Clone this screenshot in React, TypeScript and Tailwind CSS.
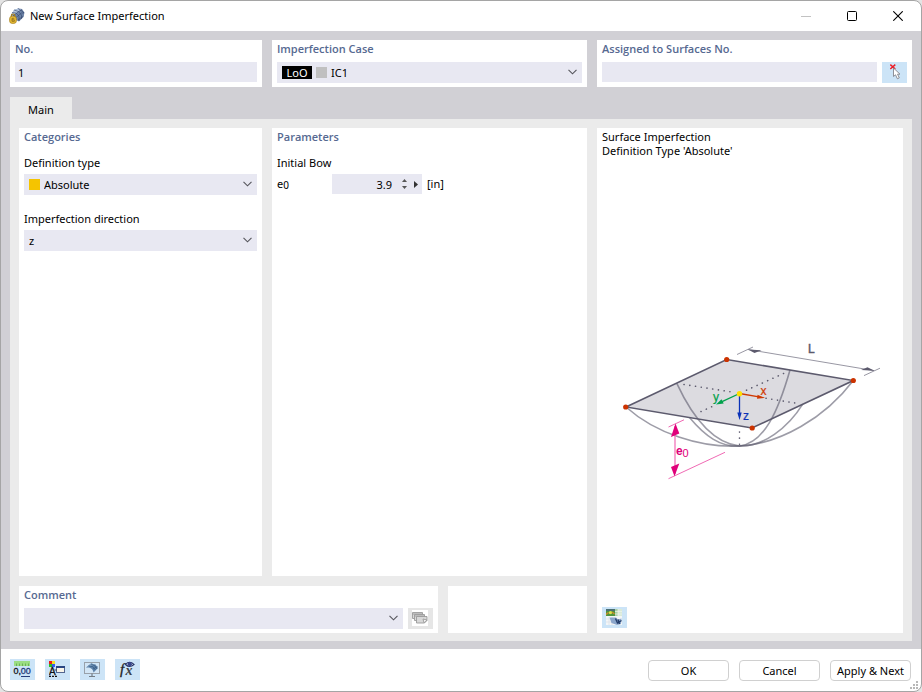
import { useState } from 'react';
import type { ReactNode } from 'react';

const heading = "block font-['Open_Sans',sans-serif] text-[11px] leading-4 font-semibold text-[#566991]";
const iconButton = 'flex h-[21px] w-[25px] shrink-0 items-start bg-[#cce4f7] pt-0.5 pl-1';
const windowButton = 'flex h-full w-[46px] items-center justify-center';
const dialogButton =
  'h-[21px] w-[81px] rounded border border-[#d0d0d0] bg-white text-[11px] leading-4 whitespace-nowrap';

function Chevron() {
  return (
    <svg width="9" height="6" viewBox="0 0 9 6" className="pointer-events-none absolute right-[5px] top-[7px]">
      <path d="M0.5 0.8 L4.5 4.8 L8.5 0.8" fill="none" stroke="#55555c" strokeWidth="1.1" />
    </svg>
  );
}

type DropdownProps = {
  id: string;
  options: string[];
  children?: ReactNode;
};

function Dropdown({ id, options, children }: DropdownProps) {
  return (
    <div className="relative flex h-[21px] min-w-0 flex-1 items-center gap-1 bg-[#e8e8f2] pl-[5px]">
      {children}
      <select id={id} className="h-full min-w-0 flex-1 appearance-none bg-transparent pr-4 text-[11px] leading-4">
        {options.map((option) => (
          <option key={option}>{option}</option>
        ))}
      </select>
      <Chevron />
    </div>
  );
}

function AppIcon() {
  return (
    <svg width="16" height="16" viewBox="0 0 16 16">
      <path d="M2 7 L5 2 L9 0.5 L13 1 L15.5 4.5 L14.5 9 L10 13.5 L7 12 L4 8 Z" fill="#6d84a8" />
      <path d="M5 2 L9 0.5 L13 1 L9.5 3.5 L5 7 L2.5 6 Z" fill="#b3c6df" />
      <path d="M3 4.5 L7 5 L10 8 L10 13 M5 2 L9.5 3.5 L12.5 7 L12.5 11 M9 0.5 L13 3 L15 5 M4 8 L9.5 3.5 L13 1.5 M7 9.5 L12.5 5 L15 5 M9 12 L14.5 8" fill="none" stroke="#34456b" strokeWidth="0.6" />
      <path d="M2.3 9 V7.8 a1.8 1.8 0 0 1 3.6 0 V9" fill="none" stroke="#a27c1d" strokeWidth="1.2" />
      <rect x="0.6" y="8.2" width="6.8" height="7.2" rx="2.6" fill="#e7bb35" stroke="#a27c1d" strokeWidth="0.7" />
      <path d="M5.3 10.3 H3 V13.3 H5.3 V11.8 H3" fill="none" stroke="#8d6b19" strokeWidth="0.8" />
    </svg>
  );
}

function PickIcon() {
  return (
    <svg width="16" height="16" viewBox="0 0 16 16">
      <path d="M4.3 0.6 L9.3 5 M9.3 0.6 L4.3 5" stroke="#ef1c25" strokeWidth="1.4" />
      <path d="M7.5 4 V12.5 L9.5 10.8 L11.4 14.8 L13.3 13.9 L11.5 10.2 H14 Z" fill="#fff" stroke="#85858b" strokeWidth="0.9" />
    </svg>
  );
}

function CommentLibraryIcon() {
  return (
    <svg width="16" height="16" viewBox="0 0 16 16">
      <rect width="16" height="16" fill="#fff" />
      <g fill="#d8d8d8" stroke="#9b9b9b" strokeWidth="0.9">
        <path d="M0.5 2.5 H10.5 V8.5 H0.5 Z M0.5 4 H10.5" />
        <path d="M2.5 4.5 H12.5 V10.5 H2.5 Z M2.5 6 H12.5" />
        <path d="M4.5 6.5 H15 V10.5 L12.5 13 H4.5 Z" />
        <path d="M12 12.8 L11 9 L15 10 Z" fill="#f5f5f5" />
      </g>
    </svg>
  );
}

function ImageIcon() {
  return (
    <svg width="16" height="16" viewBox="0 0 16 16">
      <rect width="16" height="16" fill="#f3f6f7" />
      <rect x="8" width="4" height="7" fill="#a9cfa6" />
      <rect x="12" width="4" height="7" fill="#d9ead8" />
      <rect width="9" height="7" fill="#4e9440" />
      <rect width="9" height="2" fill="#4a6f73" />
      <circle cx="4.5" cy="3.6" r="1.7" fill="#dbe046" />
      <path d="M0 5.5 L2.5 3.5 M6 3 L8.5 5" fill="none" stroke="#d08a2b" strokeWidth="1.4" />
      <path d="M9 2.5 H16 M9 5 H16 M12 0 V7" stroke="#eef4ee" strokeWidth="0.7" />
      <path d="M0 10 H8 M0 13 H8 M3 8 V16 M6 8 V16" stroke="#dbe1e8" strokeWidth="0.8" />
      <path d="M3.5 8.5 H10 L12 10.5 L15.5 9.5 L15 15 L11 16 L5.5 14 Z" fill="#8ba6cb" />
      <path d="M9.5 9.5 L11.5 14 L15.5 11.5 M12 10.5 L13.5 15" fill="none" stroke="#233d6b" strokeWidth="1.4" />
    </svg>
  );
}

function UnitsIcon() {
  return (
    <svg width="16" height="16" viewBox="0 0 16 16" className="overflow-visible font-['Liberation_Sans',sans-serif]">
      <rect width="16" height="5" fill="#9bdd83" />
      <path d="M2.5 2.5 V5 M5.5 2.5 V5 M8.5 2.5 V5 M11.5 2.5 V5 M14.5 2.5 V5" stroke="#67ae52" strokeWidth="0.9" />
      <text x="-0.5" y="13.3" fontSize="9" fill="#15151a" stroke="#15151a" strokeWidth="0.3">0,</text>
      <text x="6.7" y="13.3" fontSize="9" fill="#243b7a" stroke="#243b7a" strokeWidth="0.3">00</text>
      <path d="M7 15.5 H16" stroke="#243b7a" />
    </svg>
  );
}

function DisplayIcon() {
  return (
    <svg width="16" height="16" viewBox="0 0 16 16" className="font-['Liberation_Sans',sans-serif]">
      <rect width="3" height="3" fill="#ee1919" />
      <rect x="3" width="3" height="3" fill="#f5df22" />
      <rect y="3" width="3" height="3" fill="#22bd26" />
      <rect x="3" y="3" width="3" height="3" fill="#355bf2" />
      <text x="0" y="14" fontSize="10" fill="#111" stroke="#111" strokeWidth="0.3">A</text>
      <path d="M0 15.3 H8" stroke="#111" strokeWidth="1.2" strokeDasharray="2 1" />
      <rect x="7.5" y="5.5" width="8" height="6" fill="#f8f4e8" stroke="#53658f" />
      <rect x="7" y="5" width="9" height="2" fill="#294582" />
      <path d="M5.5 9 H8" stroke="#444" />
    </svg>
  );
}

function MonitorIcon() {
  return (
    <svg width="16" height="16" viewBox="0 0 16 16">
      <rect x="0.5" y="1.5" width="15" height="11" fill="#d2e6f6" stroke="#98a1aa" />
      <path d="M8 12.5 V15 M5 15.5 H11" stroke="#727b84" strokeWidth="1.2" />
      <path d="M2 6.5 L7 2.5 L11.5 3.5 L14 7 L9.5 11.5 Q9 7.5 5 6.5 Z" fill="#5e82aa" />
      <path d="M2.5 6.5 L7 2.5 L11.5 3.5 L6.5 5 Z" fill="#7fa0c1" />
      <path d="M4.5 5 Q9 4 11.5 9 M7 3 Q11.5 4 13 8 M9 8 L13.5 5.5" fill="none" stroke="#34597f" strokeWidth="0.7" />
    </svg>
  );
}

function FormulaIcon() {
  return (
    <svg width="16" height="16" viewBox="0 0 16 16" className="overflow-visible font-['Liberation_Serif',serif]">
      <text x="1" y="13" fontSize="15" fontStyle="italic" fill="#222" stroke="#222" strokeWidth="0.3">f</text>
      <text x="6.5" y="14" fontSize="14" fontStyle="italic" fontWeight="bold" fill="#3d4147">x</text>
      <path d="M6.5 3.5 Q10.5 -1 15 3.5 Q10.5 7.5 6.5 3.5 Z" fill="#dfe6f5" stroke="#273568" strokeWidth="1.1" />
      <circle cx="10.8" cy="3.2" r="2.1" fill="#39478b" />
    </svg>
  );
}

function SurfaceDrawing() {
  return (
    <svg
      viewBox="610 330 280 160"
      className="w-full max-w-[280px] font-['Liberation_Sans',sans-serif]"
      role="img"
    >
      {/* plate */}
      <path d="M626 407 L726.7 359.5 L853.3 380.5 L752 428 Z" fill="#dcdbe0" />

      {/* bow curves */}
      <g fill="none" stroke="#5c5a6d" strokeOpacity="0.6" strokeWidth="1.6">
        <path d="M626 407 C655 433 700 448 739.5 446 C780 444 825 418 853.3 380.5" />
        <path d="M676.8 383.3 C692 416 713 443 739.5 446 C763 447 788 428 802.7 404.2" />
        <path d="M689.5 417.5 C705 436 720 447 739.5 446 C764 443 778 412 790 370" />
      </g>

      <path d="M626 407 L726.7 359.5 L853.3 380.5 L752 428 Z" fill="none" stroke="#5c5a6d" strokeWidth="1.6" />

      <g fill="none" stroke="#5c5a6d" strokeWidth="1.6" strokeLinecap="round">
        <path d="M684 384.5 L735 392.5" strokeDasharray="0.1 5.7" />
        <path d="M766 398.3 L800 403.8" strokeDasharray="0.1 5.7" />
        <path d="M746.5 390.2 L788 371.5" strokeDasharray="0.1 5.7" />
        <path d="M701 411.5 L716 404.8" strokeDasharray="0.1 5.7" />
        <path d="M739.5 432 V445" strokeDasharray="0.1 6" />
      </g>

      {/* local axes */}
      <path d="M739.5 393.5 L722 401.7" stroke="#00a14b" strokeWidth="1.3" />
      <path d="M716 404.5 L721.5 399.2 L723.7 403.6 Z" fill="#00a14b" />
      <text x="713" y="400.5" fontSize="12" fill="#00a14b" stroke="#00a14b" strokeWidth="0.2">y</text>
      <path d="M739.5 393.5 L759 396.8" stroke="#d03800" strokeWidth="1.3" />
      <path d="M765 397.8 L757.5 394.8 L757 398.8 Z" fill="#d03800" />
      <text x="760.5" y="394.5" fontSize="12" fill="#d03800" stroke="#d03800" strokeWidth="0.2">x</text>
      <path d="M739.5 393.5 V414" stroke="#0b32b8" strokeWidth="1.3" />
      <path d="M739.5 420 L737.3 412.5 H741.7 Z" fill="#0b32b8" />
      <text x="743" y="420" fontSize="12" fill="#0b32b8" stroke="#0b32b8" strokeWidth="0.2">z</text>
      <circle cx="739.5" cy="393.7" r="2.7" fill="#ffdf00" />

      <g fill="#cc3300">
        <circle cx="625.7" cy="407" r="2.6" />
        <circle cx="726.7" cy="359.5" r="2.6" />
        <circle cx="853.3" cy="380.5" r="2.6" />
        <circle cx="752.2" cy="428" r="2.6" />
      </g>

      {/* length dimension */}
      <g stroke="#8c8b98" strokeWidth="0.9">
        <path d="M748 349.5 L874 370.6" />
        <path d="M737 354.5 L753 347" />
        <path d="M864 375.6 L880 368.2" />
      </g>
      <path d="M748 349.5 L761.5 350.3 L754.5 353 Z" fill="#5c5a6d" />
      <path d="M874.5 370.8 L861 370 L867.5 367.2 Z" fill="#5c5a6d" />
      <text x="808" y="353.3" fontSize="12" fill="#5c5a6d" stroke="#5c5a6d" strokeWidth="0.5">L</text>

      {/* bow height dimension */}
      <g stroke="#f06ab4" strokeWidth="1">
        <path d="M675 426 V474" strokeWidth="1.2" />
        <path d="M668.5 427 L684 419.8" />
        <path d="M668.5 478.7 L725 452.3" />
      </g>
      <path d="M675.5 423.5 L679.3 433.5 L671 437 Z" fill="#e0007a" />
      <path d="M674.5 476.3 L679.3 463.5 L671 467 Z" fill="#e0007a" />
      <text x="676" y="455" fontSize="12" fontWeight="bold" fill="#e0007a">e</text>
      <text x="682.5" y="457.3" fontSize="11" fill="#e0007a">0</text>
    </svg>
  );
}

function App() {
  const [no, setNo] = useState('1');
  const [surfaces, setSurfaces] = useState('');
  const [bow, setBow] = useState(3.9);

  function stepBow(delta: number) {
    setBow(Math.round((bow + delta) * 10) / 10);
  }

  return (
    <div className="min-h-screen bg-[#e4e4e4] font-['Noto_Sans',sans-serif] text-[11px] leading-4 text-black">
      <div className="flex min-h-screen flex-col overflow-hidden rounded-lg border border-[#a5a5a5] bg-white">
        <header className="flex h-[30px] shrink-0 items-center gap-[5px] pl-2">
          <AppIcon />
          <h1 className="flex-1">New Surface Imperfection</h1>
          <div className="flex h-full">
            <button aria-label="Minimize" className={windowButton}>
              <svg width="10" height="10" viewBox="0 0 10 10">
                <path d="M0 5.5 H10" stroke="#c2c2c2" />
              </svg>
            </button>
            <button aria-label="Maximize" className={windowButton}>
              <svg width="10" height="10" viewBox="0 0 10 10">
                <rect x="0.5" y="0.5" width="9" height="9" rx="1" fill="none" stroke="#000" />
              </svg>
            </button>
            <button aria-label="Close" className={windowButton}>
              <svg width="10" height="10" viewBox="0 0 10 10">
                <path d="M0.3 0.3 L9.7 9.7 M9.7 0.3 L0.3 9.7" stroke="#000" strokeWidth="1.1" />
              </svg>
            </button>
          </div>
        </header>

        <main className="flex flex-1 flex-col bg-[#d1d0d5] px-[9px] pt-[9px] pb-2">
          <div className="grid grid-cols-[252fr_315fr_315fr] gap-2.5">
            <section className="h-[47px] bg-white px-[5px] pt-px">
              <label htmlFor="no" className={heading}>No.</label>
              <input
                id="no"
                value={no}
                onChange={(e) => setNo(e.target.value)}
                className="mt-[5px] block h-5 w-full bg-[#e8e8f2] px-[3px]"
              />
            </section>
            <section className="h-[47px] bg-white px-[5px] pt-px">
              <label htmlFor="case" className={heading}>Imperfection Case</label>
              <div className="mt-[5px] flex">
                <Dropdown id="case" options={['IC1']}>
                  <span className="h-[13px] w-[30px] bg-black text-center leading-[13px] text-white">LoO</span>
                  <span className="h-[11px] w-[11px] bg-[#c0c0c0]" />
                </Dropdown>
              </div>
            </section>
            <section className="h-[47px] bg-white px-[5px] pt-px">
              <label htmlFor="surfaces" className={heading}>Assigned to Surfaces No.</label>
              <div className="mt-[5px] flex gap-[5px]">
                <input
                  id="surfaces"
                  value={surfaces}
                  onChange={(e) => setSurfaces(e.target.value)}
                  className="h-5 min-w-0 flex-1 bg-[#e8e8f2] px-[3px]"
                />
                <button aria-label="Select surfaces" className={iconButton}>
                  <PickIcon />
                </button>
              </div>
            </section>
          </div>

          <div role="tablist" className="mt-2.5 flex">
            <button role="tab" aria-selected="true" className="h-[22px] bg-[#ebebeb] px-[18px] pt-1">
              Main
            </button>
          </div>

          <div className="grid flex-1 grid-cols-[568fr_306fr] gap-2.5 bg-[#ebebeb] px-[9px] pt-[9px] pb-2">
            <div className="flex flex-col gap-2.5">
              <div className="grid flex-1 grid-cols-[243fr_315fr] gap-2.5">
                <section className="bg-white px-[5px] pt-px">
                  <h2 className={heading}>Categories</h2>
                  <label htmlFor="type" className="mt-2.5 mb-[3px] block">Definition type</label>
                  <div className="flex">
                    <Dropdown id="type" options={['Absolute', 'Relative']}>
                      <span className="h-[11px] w-[11px] bg-[#f5c400]" />
                    </Dropdown>
                  </div>
                  <label htmlFor="direction" className="mt-4 mb-[3px] block">Imperfection direction</label>
                  <div className="flex">
                    <Dropdown id="direction" options={['z']} />
                  </div>
                </section>
                <section className="bg-white px-[5px] pt-px">
                  <h2 className={heading}>Parameters</h2>
                  <h3 className="mt-2.5 mb-[3px]">Initial Bow</h3>
                  <div className="flex h-5 items-center">
                    <label htmlFor="bow" className="w-[55px]">
                      e<span className="align-[-1px] text-[10px]">0</span>
                    </label>
                    <div className="flex h-5 w-[90px] items-center bg-[#e8e8f2]">
                      <input
                        id="bow"
                        value={bow}
                        onChange={(e) => setBow(Number(e.target.value))}
                        className="h-full min-w-0 flex-1 bg-transparent text-right"
                      />
                      <div className="ml-2 flex w-2 flex-col items-center gap-1">
                        <button aria-label="Increase" onClick={() => stepBow(0.1)} className="flex h-1 items-end">
                          <svg width="5" height="3" viewBox="0 0 5 3"><path d="M0 3 L2.5 0 L5 3 Z" fill="#555" /></svg>
                        </button>
                        <button aria-label="Decrease" onClick={() => stepBow(-0.1)} className="flex h-1 items-start">
                          <svg width="5" height="3" viewBox="0 0 5 3"><path d="M0 0 L2.5 3 L5 0 Z" fill="#555" /></svg>
                        </button>
                      </div>
                      <button aria-label="More" className="mr-1 ml-1.5">
                        <svg width="4" height="7" viewBox="0 0 4 7"><path d="M0 0 L4 3.5 L0 7 Z" fill="#333" /></svg>
                      </button>
                    </div>
                    <span className="ml-[5px]">[in]</span>
                  </div>
                </section>
              </div>

              <div className="grid grid-cols-[419fr_139fr] gap-2.5">
                <section className="h-[47px] bg-white px-[5px] pt-px">
                  <label htmlFor="comment" className={heading}>Comment</label>
                  <div className="mt-[5px] flex gap-[5px]">
                    <Dropdown id="comment" options={['']} />
                    <button
                      aria-label="Comment library"
                      className="flex h-[21px] w-[25px] items-start bg-[#e6e6e6] pt-0.5 pl-1"
                    >
                      <CommentLibraryIcon />
                    </button>
                  </div>
                </section>
                <div className="bg-white" />
              </div>
            </div>

            <section className="flex flex-col bg-white px-[5px] pt-0.5 pb-[5px]">
              <p className="leading-[14px]">
                Surface Imperfection
                <br />
                Definition Type 'Absolute'
              </p>
              <div className="flex flex-1 items-center justify-center pt-[54px]">
                <SurfaceDrawing />
              </div>
              <button aria-label="Picture" className={iconButton}>
                <ImageIcon />
              </button>
            </section>
          </div>
        </main>

        <footer className="relative flex h-[42px] shrink-0 items-start justify-between pt-2.5 pr-2.5 pl-[9px]">
          <div className="flex gap-2.5">
            <button aria-label="Units" className={iconButton}><UnitsIcon /></button>
            <button aria-label="Display" className={iconButton}><DisplayIcon /></button>
            <button aria-label="View" className={iconButton}><MonitorIcon /></button>
            <button aria-label="Formula" className={iconButton}><FormulaIcon /></button>
          </div>
          <div className="flex gap-2.5 pt-px">
            <button className={dialogButton}>OK</button>
            <button className={dialogButton}>Cancel</button>
            <button className={dialogButton}>Apply &amp; Next</button>
          </div>
          <svg width="8" height="8" viewBox="0 0 8 8" className="absolute right-[3px] bottom-0.5" fill="#b8b8b8">
            <path d="M6 0h2v2h-2z M3 3h2v2h-2z M6 3h2v2h-2z M0 6h2v2h-2z M3 6h2v2h-2z M6 6h2v2h-2z" />
          </svg>
        </footer>
      </div>
    </div>
  );
}

export default App;
